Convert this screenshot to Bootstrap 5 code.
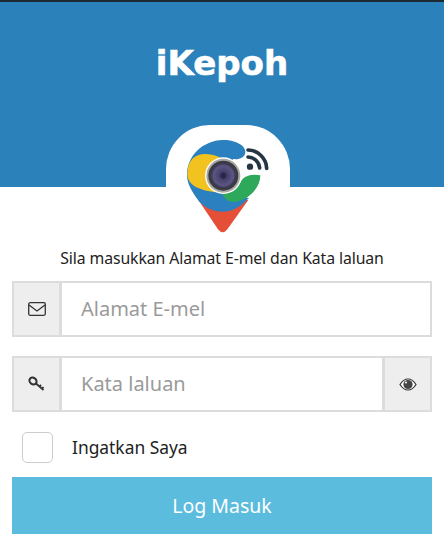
<!DOCTYPE html>
<html lang="en">
<head>
<meta charset="UTF-8">
<meta name="viewport" content="width=device-width, initial-scale=1.0">
<title>iKepoh</title>
<link href="https://cdn.jsdelivr.net/npm/bootstrap@5.3.1/dist/css/bootstrap.min.css" rel="stylesheet">
<style>
body { font-family: "Noto Sans", sans-serif; color: #222; background: #fff; overflow: hidden; }
.top_bar { height: 187px; background: #2b81ba; border-top: 2px solid #1c2a33; }
.app_title { font-family: "DejaVu Sans", sans-serif; font-weight: 700; font-size: 34px; line-height: 40px; color: #fff; margin: 41px 0 0; -webkit-text-stroke: .6px #fff; }
.logo_tab { width: 124px; height: 62px; margin-left: 12px; background: #fff; border-radius: 44px 44px 0 0; }
.logo_pic { position: absolute; left: 150px; top: 110px; width: 150px; height: 130px; }
.intro_text { font-size: 15.8px; line-height: 20px; margin: 61px 0 13px; letter-spacing: -.1px; }
.login_form { padding: 0 12px; }
.login_form .input-group { height: 56px; margin-bottom: 19px; }
.login_form .input-group-text { width: 49px; justify-content: center; padding: 0; background: #eee; border: 2px solid #dcdcdc; border-radius: 0; }
.login_form .form-control { border: 2px solid #dcdcdc; border-radius: 0; padding: 0 19px; font-size: 20px; box-shadow: none; }
.login_form .form-control::placeholder { color: #9a9a9a; }
.remember_row { height: 31px; margin: 20px 0 14px 10px; }
.remember_row .form-check-input { width: 31px; height: 31px; margin: 0 19px 0 0; border: 1px solid #ccc; border-radius: 5px; float: none; }
.remember_row .form-check-label { font-size: 17.4px; }
.login_btn { height: 57px; background: #5bbcdd; color: #fff; font-size: 19.5px; border: 0; border-radius: 0; }
</style>
</head>
<body>
<svg class="logo_pic" viewBox="0 0 450 390" aria-hidden="true">
    <defs>
        <radialGradient id="lensGlass">
            <stop offset="0" stop-color="#27223f"/>
            <stop offset=".22" stop-color="#2f2a4e"/>
            <stop offset=".3" stop-color="#443e6a"/>
            <stop offset=".8" stop-color="#5c5782"/>
            <stop offset="1" stop-color="#383456"/>
        </radialGradient>
    </defs>
    <path d="M145 270L295 270L232 358Q218 376 204 358Z" fill="#e54e37"/>
    <path d="M218 90C250 88 286 104 286 125C286 145 265 149 250 147L225 170L225 240L270 260L297 264C270 293 245 305 218 305C190 305 165 292 148 275C125 245 111 220 111 195C111 135 160 92 218 90Z" fill="#2b81c0"/>
    <path d="M112 192C112 150 135 132 165 132C195 132 215 143 232 160L232 247C190 250 112 240 112 192Z" fill="#f2c21e"/>
    <path d="M215 250C240 240 262 238 272 216C280 200 300 190 331 196C331 232 300 268 255 276C235 278 222 265 215 250Z" fill="#2ea85a"/>
    <circle cx="220" cy="197" r="55" fill="#fff"/>
    <circle cx="220" cy="197" r="51" fill="#a8a8a8"/>
    <circle cx="220" cy="197" r="45" fill="#3c3c40"/>
    <circle cx="220" cy="197" r="37" fill="url(#lensGlass)"/>
    <circle cx="300" cy="170" r="9.500" fill="#263544"/>
    <path d="M294 141A36 36 0 0 1 329 174" fill="none" stroke="#263544" stroke-width="11" stroke-linecap="round"/>
    <path d="M294 120A57 57 0 0 1 350 175" fill="none" stroke="#263544" stroke-width="11" stroke-linecap="round"/>
</svg>
<div class="top_bar d-flex flex-column align-items-center">
    <h1 class="app_title">iKepoh</h1>
    <div class="logo_tab mt-auto"></div>
</div>
<p class="intro_text text-center">Sila masukkan Alamat E-mel dan Kata laluan</p>
<form class="login_form">
    <div class="input-group">
        <span class="input-group-text">
            <svg width="18" height="14" viewBox="0 0 18 14" fill="none" stroke="#333" stroke-width="1.3"><rect x=".7" y=".7" width="16.6" height="12.6" rx="1.5"/><path d="M1 3l8 6 8-6"/></svg>
        </span>
        <input type="text" class="form-control" placeholder="Alamat E-mel">
    </div>
    <div class="input-group">
        <span class="input-group-text">
            <svg width="17" height="16" viewBox="0 0 17 16" fill="none" stroke="#333"><ellipse cx="5" cy="5" rx="3.800" ry="3.200" stroke-width="2" transform="rotate(35 5 5)"/><path d="M8 7.500l7.500 6.500M11.500 10.500l1.500-1.700M14 12.700l1.500-1.700" stroke-width="1.800"/></svg>
        </span>
        <input type="password" class="form-control" placeholder="Kata laluan">
        <span class="input-group-text">
            <svg width="18" height="13" viewBox="0 0 18 13"><path d="M1 6.500C3.500 2.500 6 1 9 1s5.500 1.500 8 5.500c-2.500 4-5 5.500-8 5.500S3.500 10.500 1 6.500Z" fill="#fff" stroke="#333" stroke-width="1.2"/><circle cx="9" cy="6.500" r="4.600" fill="#444"/><circle cx="7" cy="4.500" r="1.100" fill="#eee"/></svg>
        </span>
    </div>
    <div class="remember_row d-flex align-items-center">
        <input class="form-check-input" type="checkbox" id="rememberMe">
        <label class="form-check-label" for="rememberMe">Ingatkan Saya</label>
    </div>
    <button type="button" class="btn login_btn w-100">Log Masuk</button>
</form>
<script src="https://cdn.jsdelivr.net/npm/bootstrap@5.3.1/dist/js/bootstrap.bundle.min.js"></script>
</body>
</html>
